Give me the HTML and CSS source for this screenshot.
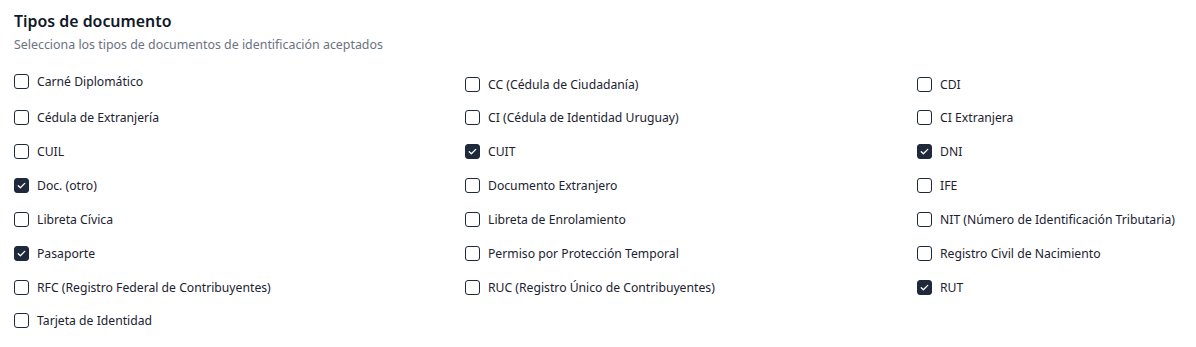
FILE: index.html
```html
<!DOCTYPE html>
<html lang="es">
<head>
<meta charset="utf-8">
<link rel="stylesheet" href="styles.css">
</head>
<body>
<section class="panel">
  <h2 class="title">Tipos de documento</h2>
  <p class="subtitle">Selecciona los tipos de documentos de identificación aceptados</p>
  <div class="grid">
    <label class="item first"><span class="box"></span>Carné Diplomático</label>
    <label class="item"><span class="box"></span>CC (Cédula de Ciudadanía)</label>
    <label class="item"><span class="box"></span>CDI</label>

    <label class="item"><span class="box"></span>Cédula de Extranjería</label>
    <label class="item"><span class="box"></span>CI (Cédula de Identidad Uruguay)</label>
    <label class="item"><span class="box"></span>CI Extranjera</label>

    <label class="item"><span class="box"></span>CUIL</label>
    <label class="item"><span class="box checked"><svg viewBox="0 0 16 16"><path d="M4 8.3l2.6 2.5L12 5.4"/></svg></span>CUIT</label>
    <label class="item"><span class="box checked"><svg viewBox="0 0 16 16"><path d="M4 8.3l2.6 2.5L12 5.4"/></svg></span>DNI</label>

    <label class="item"><span class="box checked"><svg viewBox="0 0 16 16"><path d="M4 8.3l2.6 2.5L12 5.4"/></svg></span>Doc. (otro)</label>
    <label class="item"><span class="box"></span>Documento Extranjero</label>
    <label class="item"><span class="box"></span>IFE</label>

    <label class="item"><span class="box"></span>Libreta Cívica</label>
    <label class="item"><span class="box"></span>Libreta de Enrolamiento</label>
    <label class="item"><span class="box"></span>NIT (Número de Identificación Tributaria)</label>

    <label class="item"><span class="box checked"><svg viewBox="0 0 16 16"><path d="M4 8.3l2.6 2.5L12 5.4"/></svg></span>Pasaporte</label>
    <label class="item"><span class="box"></span>Permiso por Protección Temporal</label>
    <label class="item"><span class="box"></span>Registro Civil de Nacimiento</label>

    <label class="item"><span class="box"></span>RFC (Registro Federal de Contribuyentes)</label>
    <label class="item"><span class="box"></span>RUC (Registro Único de Contribuyentes)</label>
    <label class="item"><span class="box checked"><svg viewBox="0 0 16 16"><path d="M4 8.3l2.6 2.5L12 5.4"/></svg></span>RUT</label>

    <label class="item"><span class="box"></span>Tarjeta de Identidad</label>
  </div>
</section>
</body>
</html>
```

FILE: styles.css
```css
html, body {
  margin: 0;
  background: #ffffff;
}
body {
  font-family: "Noto Sans", "Open Sans", sans-serif;
  color: #1f2937;
}
.panel {
  padding: 9px 14px 0 14px;
}
.title {
  margin: 0;
  font-size: 15.9px;
  line-height: 24px;
  font-weight: 600;
  color: #111827;
}
.subtitle {
  margin: 3px 0 0 0;
  font-size: 12.4px;
  line-height: 18px;
  color: #6b7280;
}
.grid {
  display: grid;
  grid-template-columns: 451px 452px 1fr;
  grid-auto-rows: 33.85px;
  margin-top: 20px;
}
.item {
  display: flex;
  align-items: center;
  gap: 8px;
  font-size: 12.2px;
  color: #1a2230;
  white-space: nowrap;
  height: 20px;
}
.item.first {
  margin-top: -3px;
}
.box {
  flex: none;
  width: 15px;
  height: 15px;
  box-sizing: border-box;
  border: 1.5px solid #1f2937;
  border-radius: 3px;
  display: inline-flex;
  align-items: center;
  justify-content: center;
}
.box.checked {
  background: #1e293b;
  border-color: #1e293b;
}
.box svg {
  width: 13px;
  height: 13px;
  fill: none;
  stroke: #ffffff;
  stroke-width: 1.6;
  stroke-linecap: round;
  stroke-linejoin: round;
}
```
